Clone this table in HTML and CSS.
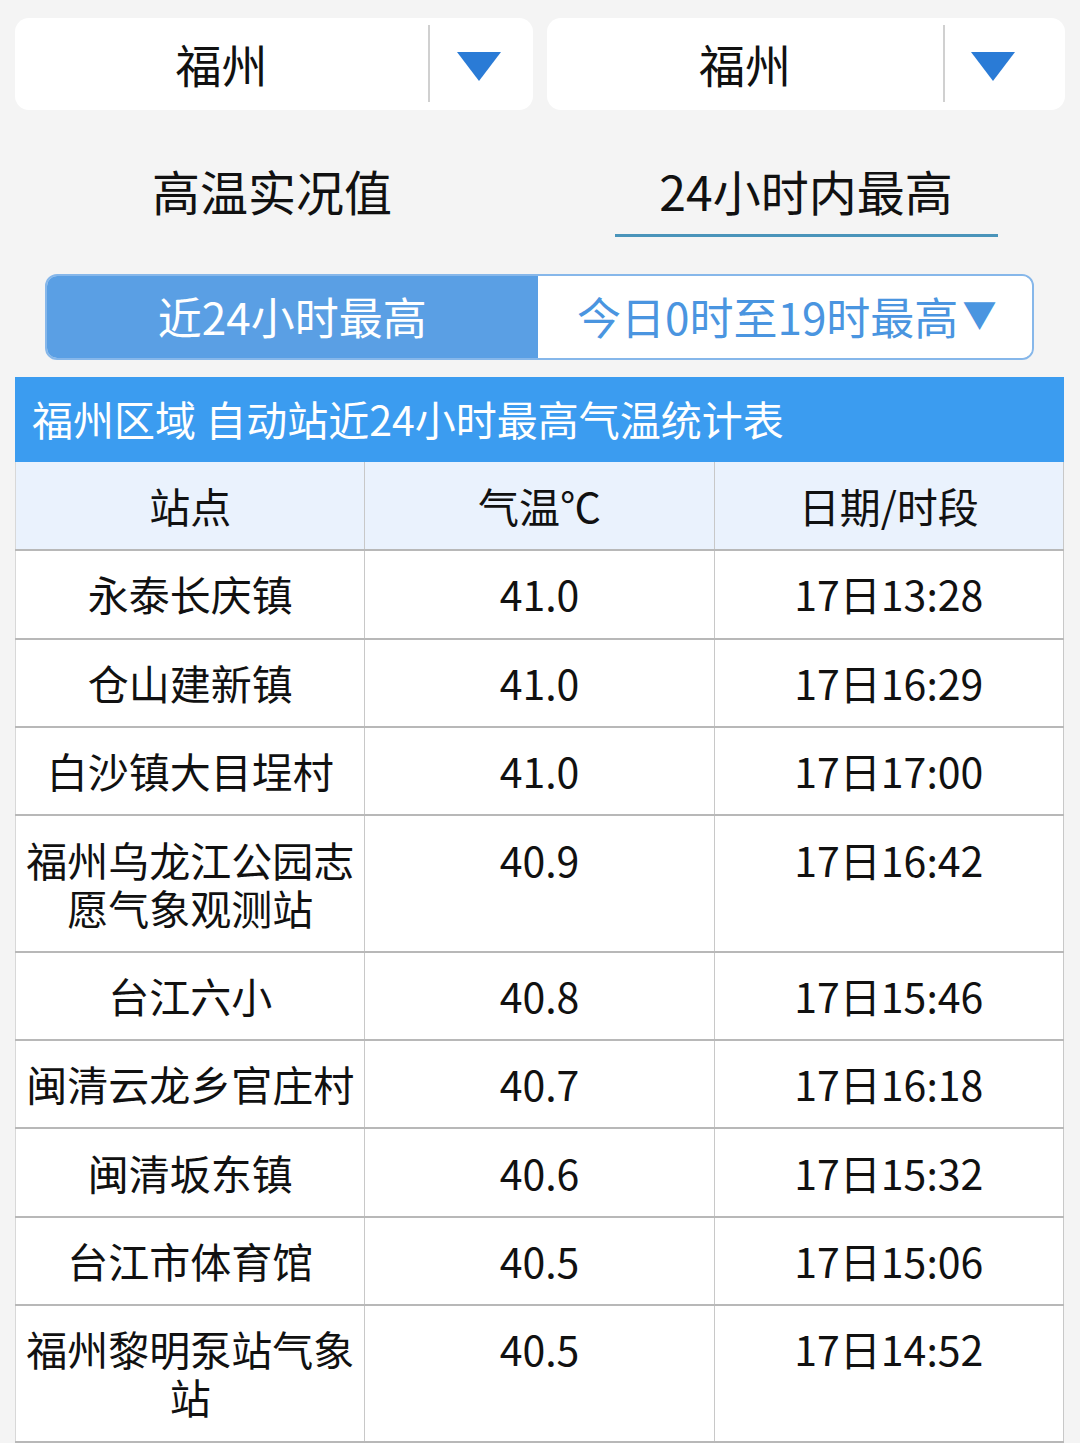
FILE: index.html
```html
<!DOCTYPE html>
<html lang="zh-CN">
<head>
<meta charset="utf-8">
<title>福州 高温实况</title>
<link rel="stylesheet" href="styles.css">
</head>
<body>
<div class="selects">
  <div class="select select-left">
    <div class="select-name">福州</div>
    <div class="select-divider"></div>
    <div class="select-arrow"><span class="tri"></span></div>
  </div>
  <div class="select select-right">
    <div class="select-name">福州</div>
    <div class="select-divider"></div>
    <div class="select-arrow"><span class="tri"></span></div>
  </div>
</div>

<div class="tabs">
  <div class="tab">
    <div class="tab-label">高温实况值</div>
    <div class="tab-line"></div>
  </div>
  <div class="tab tab-active">
    <div class="tab-label">24小时内最高</div>
    <div class="tab-line"></div>
  </div>
</div>

<div class="segment">
  <div class="seg seg-on">近24小时最高</div>
  <div class="seg seg-off">今日0时至19时最高<span class="seg-caret">▼</span></div>
</div>

<div class="panel">
  <div class="panel-title">福州区域 自动站近24小时最高气温统计表</div>
  <table class="grid">
    <colgroup>
      <col class="c1"><col class="c2"><col class="c3">
    </colgroup>
    <thead>
      <tr><th>站点</th><th>气温℃</th><th>日期/时段</th></tr>
    </thead>
    <tbody>
      <tr><td>永泰长庆镇</td><td>41.0</td><td>17日13:28</td></tr>
      <tr><td>仓山建新镇</td><td>41.0</td><td>17日16:29</td></tr>
      <tr><td>白沙镇大目埕村</td><td>41.0</td><td>17日17:00</td></tr>
      <tr><td>福州乌龙江公园志愿气象观测站</td><td>40.9</td><td>17日16:42</td></tr>
      <tr><td>台江六小</td><td>40.8</td><td>17日15:46</td></tr>
      <tr><td>闽清云龙乡官庄村</td><td>40.7</td><td>17日16:18</td></tr>
      <tr><td>闽清坂东镇</td><td>40.6</td><td>17日15:32</td></tr>
      <tr><td>台江市体育馆</td><td>40.5</td><td>17日15:06</td></tr>
      <tr><td>福州黎明泵站气象站</td><td>40.5</td><td>17日14:52</td></tr>
    </tbody>
  </table>
</div>
</body>
</html>
```

FILE: styles.css
```css
html, body {
  margin: 0;
  padding: 0;
}
body {
  background: #f4f4f4;
  font-family: "Noto Sans CJK SC", "Noto Sans", sans-serif;
  color: #111;
  width: 1080px;
  height: 1443px;
  overflow: hidden;
}

/* dropdowns */
.selects {
  display: flex;
  gap: 14px;
  padding: 18px 15px 0 15px;
}
.select {
  flex: 1;
  height: 92px;
  background: #fff;
  border-radius: 14px;
  display: flex;
  align-items: center;
}
.select-name {
  text-align: center;
  font-size: 46px;
  line-height: 60px;
  font-weight: 400;
  color: #111;
  padding-bottom: 3px;
}
.select-left .select-name { width: 413px; }
.select-right .select-name { width: 396px; }
.select-divider {
  width: 2px;
  align-self: stretch;
  margin: 7px 0 8px;
  background: #d0d0d0;
}
.select-arrow {
  flex: 1;
  display: flex;
  justify-content: center;
  align-items: center;
  padding-top: 4px;
}
.select-left .select-arrow { padding-right: 6px; }
.select-right .select-arrow { padding-right: 24px; }
.tri {
  width: 0;
  height: 0;
  border-left: 22px solid transparent;
  border-right: 22px solid transparent;
  border-top: 29px solid #2a7bd6;
}

/* tabs */
.tabs {
  display: grid;
  grid-template-columns: 1fr 1fr;
  padding: 0 7px 0 5px;
  margin-top: 50px;
}
.tab {
  display: flex;
  flex-direction: column;
  align-items: center;
}
.tab-label {
  font-size: 48px;
  line-height: 60px;
  font-weight: 400;
  color: #111;
}
.tab-line {
  width: 383px;
  height: 3px;
  margin-top: 14px;
  background: transparent;
}
.tab-active .tab-line {
  background: #4a94ba;
}

/* segmented control */
.segment {
  display: flex;
  margin: 37px 46px 0 45px;
  height: 86px;
  border: 2px solid #86b7ea;
  border-radius: 12px;
  overflow: hidden;
  box-sizing: border-box;
}
.seg {
  flex: 1;
  display: flex;
  align-items: center;
  justify-content: center;
  font-size: 44px;
  padding-bottom: 3px;
}
.seg-on {
  background: #5a9fe4;
  color: #fff;
}
.seg-off {
  background: #fff;
  color: #4a95e0;
  padding-left: 4px;
}
.seg-caret {
  font-size: 34px;
  margin-left: 4px;
  position: relative;
  top: -2px;
}

/* table */
.panel {
  margin: 17px 16px 0 15px;
}
.panel-title {
  height: 85px;
  background: #3b9cf0;
  color: #fff;
  font-size: 41px;
  line-height: 82px;
  padding-bottom: 3px;
  box-sizing: border-box;
  padding-left: 17px;
  white-space: nowrap;
}
.grid {
  width: 100%;
  border-collapse: collapse;
  table-layout: fixed;
  background: #fff;
  border-left: 1px solid #d8d8d8;
}
.c1, .c2, .c3 { width: 33.33%; }
.grid th,
.grid td {
  font-size: 41px;
  line-height: 48px;
  font-weight: 400;
  color: #111;
  text-align: center;
  vertical-align: top;
  padding: 18.2px 8px 20.2px;
  border-bottom: 2px solid #b8b8b8;
  border-right: 1px solid #c8c8c8;
}
.grid th {
  background: #eaf2fd;
  padding-top: 19px;
}
```
